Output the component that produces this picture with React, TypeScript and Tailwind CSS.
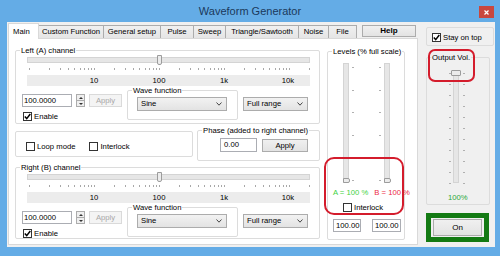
import React from "react";

// log scale 1 .. 20000, 65px per decade
const logTicks: number[] = [];
for (let d = 0; d < 5; d++) {
  for (let m = 1; m < 10; m++) {
    const v = m * 10 ** d;
    if (v <= 20000) logTicks.push(2 + 65 * Math.log10(v));
  }
}
const levelTicks = [4, 27, 49, 72, 94, 117];
const volTicks = Array.from({ length: 11 }, (_, i) => 1 + i * 11);

const Check = ({ checked, label }: { checked?: boolean; label: string }) => (
  <div className="flex items-center gap-[2px] h-[9px]">
    <div className="w-[9px] h-[9px] border border-[#333] bg-white flex items-center justify-center shrink-0">
      {checked && (
        <svg width="7" height="7" viewBox="0 0 7 7">
          <path d="M0.8 3.6 L2.7 5.6 L6.3 1" stroke="#000" strokeWidth="1.5" fill="none" />
        </svg>
      )}
    </div>
    <span className="whitespace-nowrap">{label}</span>
  </div>
);

const Group = ({
  label,
  className,
  labelBg,
  children,
}: {
  label?: string;
  className: string;
  labelBg: string;
  children?: React.ReactNode;
}) => (
  <div className={`relative border border-[#dcdcdc] rounded-[2px] shrink-0 ${className}`}>
    {label && (
      <span className={`absolute -top-[5px] left-[4px] px-[1px] leading-[9px] whitespace-nowrap ${labelBg}`}>
        {label}
      </span>
    )}
    {children}
  </div>
);

const Combo = ({ text, className }: { text: string; className: string }) => (
  <div
    className={`flex items-center justify-between pl-[3px] pr-[4px] border border-[#acacac] bg-gradient-to-b from-[#f2f2f2] to-[#e3e3e3] shrink-0 ${className}`}
  >
    <span>{text}</span>
    <svg width="6" height="4" viewBox="0 0 6 4">
      <path d="M0.5 0.5 L3 3.2 L5.5 0.5" stroke="#444" strokeWidth="1" fill="none" />
    </svg>
  </div>
);

const ChannelGroup = ({ label, className }: { label: string; className: string }) => (
  <Group label={label} className={className} labelBg="bg-white">
    {/* frequency slider */}
    <div className="ml-[11px] w-[283px]">
      <div className="relative h-[12px] mt-[3px] pt-[3px]">
        <div className="h-[6px] bg-[#e6e6e6] border border-[#d4d4d4]" />
        <div className="absolute left-[130px] top-[1px] w-[5px] h-[10px] bg-[#ececec] border border-[#9c9c9c] rounded-b-[2px]" />
      </div>
      <svg className="block mt-[2px]" width="283" height="2">
        {logTicks.map((x, i) => (
          <rect key={i} x={Math.round(x)} y={0} width={1} height={2} fill="#a8a8a8" />
        ))}
      </svg>
      <div className="relative mt-[5px] h-[11px] bg-[#ececec]">
        <span className="absolute left-[67px] top-[2px] -translate-x-1/2">10</span>
        <span className="absolute left-[132px] top-[2px] -translate-x-1/2">100</span>
        <span className="absolute left-[197px] top-[2px] -translate-x-1/2">1k</span>
        <span className="absolute left-[261px] top-[2px] -translate-x-1/2">10k</span>
      </div>
    </div>
    {/* amplitude / wave controls */}
    <div className="flex items-start mt-[3px]">
      <div className="ml-[6px] w-[100px] flex flex-col mt-[5px]">
        <div className="flex items-center">
          <div className="w-[50px] h-[13px] border border-[#abadb3] bg-white flex items-center pl-[1px]">100.0000</div>
          <div className="ml-[4px] w-[9px] h-[13px] flex flex-col border border-[#acacac] bg-[#efefef]">
            <div className="h-[6px] flex items-center justify-center border-b border-[#acacac]">
              <svg width="4" height="2" viewBox="0 0 4 2"><path d="M0 2 L2 0 L4 2 Z" fill="#333" /></svg>
            </div>
            <div className="flex-1 flex items-center justify-center">
              <svg width="4" height="2" viewBox="0 0 4 2"><path d="M0 0 L2 2 L4 0 Z" fill="#333" /></svg>
            </div>
          </div>
          <div className="ml-[4px] w-[33px] h-[13px] border border-[#dadada] bg-[#f4f4f4] text-[#a8a8a8] flex items-center justify-center">
            Apply
          </div>
        </div>
        <div className="mt-[5px] ml-[1px]">
          <Check checked label="Enable" />
        </div>
      </div>
      <Group label="Wave function" className="ml-[5px] mt-[1px] w-[111px] h-[30px]" labelBg="bg-white">
        <Combo text="Sine" className="ml-[9px] mt-[6px] w-[90px] h-[14px]" />
      </Group>
      <Combo text="Full range" className="ml-[5px] mt-[8px] w-[65px] h-[14px]" />
    </div>
  </Group>
);

const Tab = ({ text, className }: { text: string; className: string }) => (
  <div
    className={`h-[13px] -ml-px first:ml-0 border border-b-0 border-[#acacac] bg-gradient-to-b from-[#f0f0f0] to-[#e5e5e5] flex items-center justify-center whitespace-nowrap ${className}`}
  >
    {text}
  </div>
);

const App = () => {
  return (
    <div className="relative w-[500px] h-[256px] bg-[#64ace6] flex flex-col font-['Liberation_Sans',Arial,sans-serif] text-[7.7px] leading-none text-black overflow-hidden">
      {/* title bar */}
      <div className="h-[22px] shrink-0 grid grid-cols-[1fr_auto_1fr]">
        <div />
        <div className="text-[11px] text-[#1b395b] pt-[6px]">Waveform Generator</div>
        <div className="flex justify-end pr-[6px] pt-[6px]">
          <div className="w-[15px] h-[12px] bg-[#c8473e] flex items-center justify-center">
            <svg width="5" height="5" viewBox="0 0 5 5">
              <path d="M0.5 0.5 L4.5 4.5 M4.5 0.5 L0.5 4.5" stroke="#fff" strokeWidth="1.2" />
            </svg>
          </div>
        </div>
      </div>

      {/* client area */}
      <div className="flex ml-[7px] mr-[5px] h-[225px] bg-[#f0f0f0] shrink-0">
        {/* tabs */}
        <div className="ml-[1px] w-[410px] flex flex-col">
          <div className="h-[16px] flex items-end">
            <div className="relative z-10 w-[31px] h-[16px] -mb-px bg-white border border-b-0 border-[#d9d9d9] flex items-center pl-[4px]">
              Main
            </div>
            <Tab text="Custom Function" className="w-[66px]" />
            <Tab text="General setup" className="w-[58px]" />
            <Tab text="Pulse" className="w-[34px]" />
            <Tab text="Sweep" className="w-[33px]" />
            <Tab text="Triangle/Sawtooth" className="w-[74px]" />
            <Tab text="Noise" className="w-[31px]" />
            <Tab text="File" className="w-[29px]" />
            <div className="ml-[5px] mb-[1px] w-[54px] h-[12px] border border-[#acacac] bg-gradient-to-b from-[#f0f0f0] to-[#e3e3e3] flex items-center justify-center font-bold text-[8px]">
              Help
            </div>
          </div>

          {/* tab page */}
          <div className="h-[207px] bg-white border border-[#d9d9d9] flex">
            <div className="ml-[6px] w-[305px] flex flex-col">
              <ChannelGroup label="Left (A) channel" className="mt-[11px] h-[74px]" />
              <div className="flex items-start mt-[6px]">
                <Group className="mt-[1px] w-[178px] h-[26px]" labelBg="bg-white">
                  <div className="flex items-center mt-[10px] ml-[10px]">
                    <Check label="Loop mode" />
                    <div className="ml-[14px]">
                      <Check label="Interlock" />
                    </div>
                  </div>
                </Group>
                <Group label="Phase (added to right channel)" className="ml-[4px] w-[123px] h-[31px]" labelBg="bg-white">
                  <div className="flex items-start ml-[22px] mt-[7px]">
                    <div className="w-[37px] h-[14px] border border-[#abadb3] bg-white flex items-center pl-[3px]">0.00</div>
                    <div className="ml-[5px] mt-[1px] w-[46px] h-[13px] border border-[#acacac] bg-gradient-to-b from-[#f0f0f0] to-[#e3e3e3] flex items-center justify-center">
                      Apply
                    </div>
                  </div>
                </Group>
              </div>
              <ChannelGroup label="Right (B) channel" className="mt-[6px] h-[72px]" />
            </div>

            {/* levels */}
            <Group label="Levels (% full scale)" className="ml-[7px] mt-[12px] w-[78px] h-[189px]" labelBg="bg-white">
              <div className="flex mt-[11px] h-[120px]">
                <div className="relative ml-[15px] w-[6px] h-[120px] bg-[#e6e6e6] border border-[#d4d4d4]">
                  <div className="absolute -left-[1px] bottom-[-1px] w-[7px] h-[5px] bg-[#ececec] border border-[#9c9c9c] rounded-r-[2px]" />
                </div>
                <svg className="ml-[3px]" width="2" height="120">
                  {levelTicks.map((y) => (
                    <rect key={y} x={0} y={y} width={2} height={1} fill="#b0b0b0" />
                  ))}
                </svg>
                <svg className="ml-[25px]" width="2" height="120">
                  {levelTicks.map((y) => (
                    <rect key={y} x={0} y={y} width={2} height={1} fill="#b0b0b0" />
                  ))}
                </svg>
                <div className="relative ml-[3px] w-[6px] h-[120px] bg-[#e6e6e6] border border-[#d4d4d4]">
                  <div className="absolute -left-[1px] bottom-[-1px] w-[7px] h-[5px] bg-[#ececec] border border-[#9c9c9c] rounded-r-[2px]" />
                </div>
              </div>
              <div className="flex gap-[6px] ml-[5px] mt-[5px] h-[9px] items-center whitespace-nowrap">
                <span className="text-[#3fd23f]">A = 100 %</span>
                <span className="text-[#ec2a45]">B = 100 %</span>
              </div>
              <div className="ml-[15px] mt-[6px]">
                <Check label="Interlock" />
              </div>
              <div className="flex ml-[5px] mt-[7px] gap-[11px]">
                <div className="w-[28px] h-[13px] border border-[#abadb3] bg-white flex items-center pl-[2px]">100.00</div>
                <div className="w-[29px] h-[13px] border border-[#abadb3] bg-white flex items-center pl-[2px]">100.00</div>
              </div>
            </Group>
          </div>
        </div>

        {/* right panel */}
        <div className="flex-1 flex flex-col">
          <Group className="ml-[8px] mt-[5px] w-[68px] h-[19px]" labelBg="bg-[#f0f0f0]">
            <div className="ml-[5px] mt-[5px]">
              <Check checked label="Stay on top" />
            </div>
          </Group>
          <Group label="Output Vol." className="ml-[8px] mt-[11px] w-[64px] h-[148px]" labelBg="bg-[#f0f0f0]">
            <div className="flex mt-[14px] h-[112px]">
              <svg className="ml-[22px]" width="2" height="112">
                {volTicks.map((y) => (
                  <rect key={y} x={0} y={y} width={2} height={1} fill="#b0b0b0" />
                ))}
              </svg>
              <div className="relative ml-[2px] w-[6px] h-[111px] bg-[#e6e6e6] border border-[#d4d4d4]">
                <div className="absolute -left-[3px] -top-[3px] w-[10px] h-[6px] bg-[#ececec] border border-[#9c9c9c] rounded-[1px]" />
              </div>
              <svg className="ml-[4px]" width="2" height="112">
                {volTicks.map((y) => (
                  <rect key={y} x={0} y={y} width={2} height={1} fill="#b0b0b0" />
                ))}
              </svg>
            </div>
            <div className="ml-[21px] mt-[10px] text-[#2fa83a]">100%</div>
          </Group>
          <div className="ml-[8px] mt-[8px] w-[63px] h-[29px] border-[5px] border-[#137a13]">
            <div className="ml-[2px] mt-[1px] w-[49px] h-[17px] border border-[#acacac] bg-gradient-to-b from-[#f0f0f0] to-[#e3e3e3] flex items-center justify-center text-[8px]">
              On
            </div>
          </div>
        </div>
      </div>

      {/* annotations */}
      <div className="absolute left-[324px] top-[157px] w-[80px] h-[58px] border-2 border-[#d41c2c] rounded-[10px]" />
      <div className="absolute left-[428px] top-[49px] w-[47px] h-[33px] border-2 border-[#d41c2c] rounded-[7px]" />
    </div>
  );
};

export default App;
